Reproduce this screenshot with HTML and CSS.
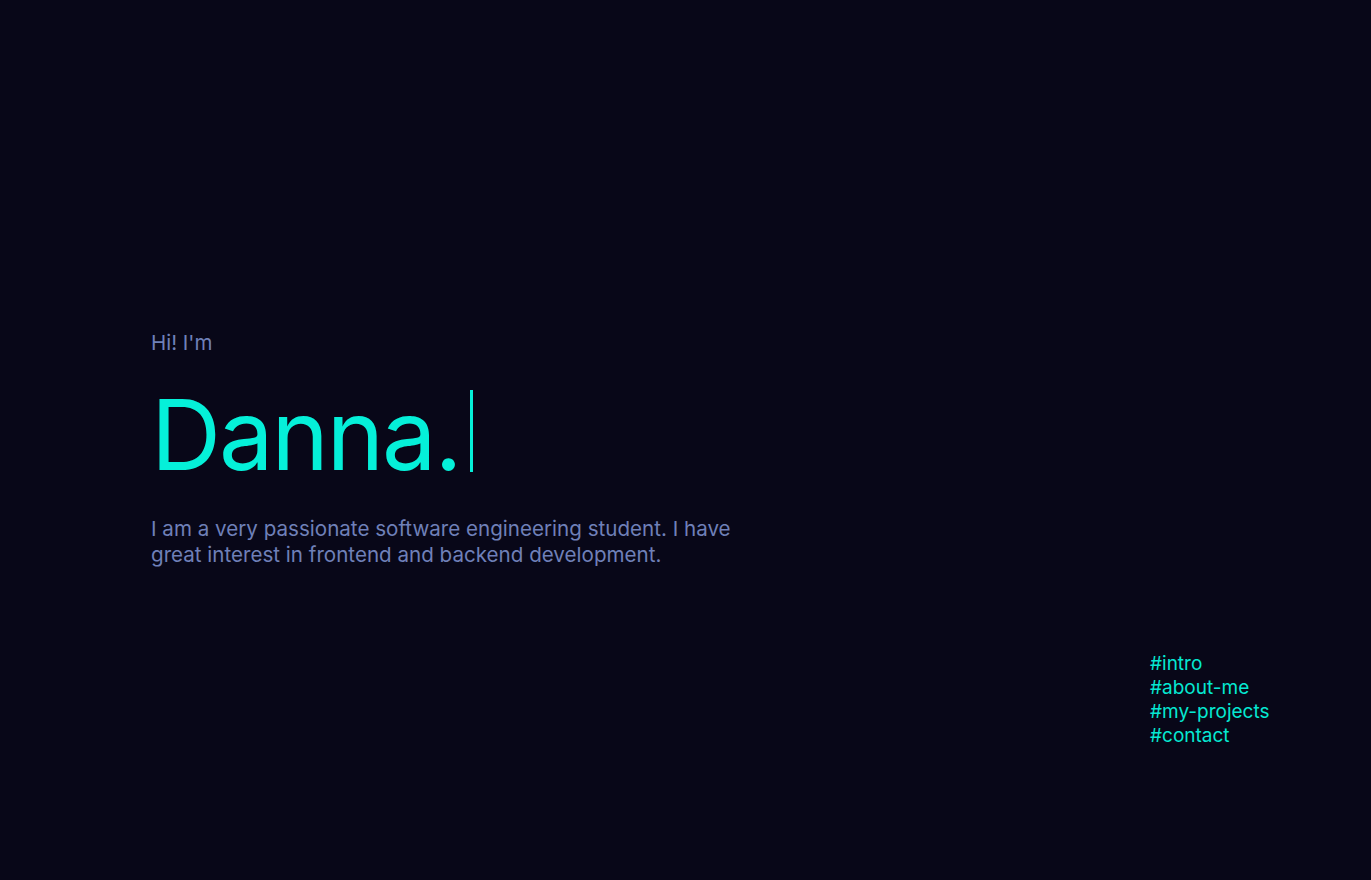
FILE: index.html
```html
<!DOCTYPE html>
<html lang="en">
<head>
<meta charset="utf-8">
<title>Danna</title>
<link rel="stylesheet" href="styles.css">
</head>
<body>
<div class="page">
  <section class="hero">
    <p class="greeting">Hi! I'm</p>
    <h1 class="name">Danna.<span class="cursor"></span></h1>
    <p class="intro">I am a very passionate software engineering student. I have great interest in frontend and backend development.</p>
  </section>
  <nav class="nav">
    <a href="#intro">#intro</a>
    <a href="#about-me">#about-me</a>
    <a href="#my-projects">#my-projects</a>
    <a href="#contact">#contact</a>
  </nav>
</div>
</body>
</html>
```
FILE: styles.css
```css
html, body {
  margin: 0;
  padding: 0;
  background: #080718;
  height: 100%;
}
body {
  font-family: "Inter", "Lato", sans-serif;
}
.page {
  height: 880px;
  display: flex;
  flex-direction: column;
  padding: 331px 0 0 151px;
  box-sizing: border-box;
}
.hero {
  display: flex;
  flex-direction: column;
}
.greeting {
  margin: 0;
  font-size: 20.5px;
  line-height: 24px;
  color: #6f80b8;
}
.name {
  margin: 30px 0 0 0;
  font-weight: 400;
  font-size: 97px;
  line-height: 100px;
  color: #05f0d9;
  display: flex;
  align-items: center;
  letter-spacing: -2px;
}
.cursor {
  display: inline-block;
  width: 3px;
  height: 82px;
  background: #05f0d9;
  margin-left: 9px;
  margin-top: -8px;
}
.intro {
  margin: 31px 0 0 0;
  max-width: 610px;
  font-size: 20.6px;
  line-height: 26px;
  color: #6f80b8;
}
.nav {
  align-self: flex-end;
  margin: 84px 100px 0 0;
  width: 121px;
  display: flex;
  flex-direction: column;
}
.nav a {
  color: #05e8d2;
  text-decoration: none;
  font-size: 19px;
  line-height: 24px;
}
```
